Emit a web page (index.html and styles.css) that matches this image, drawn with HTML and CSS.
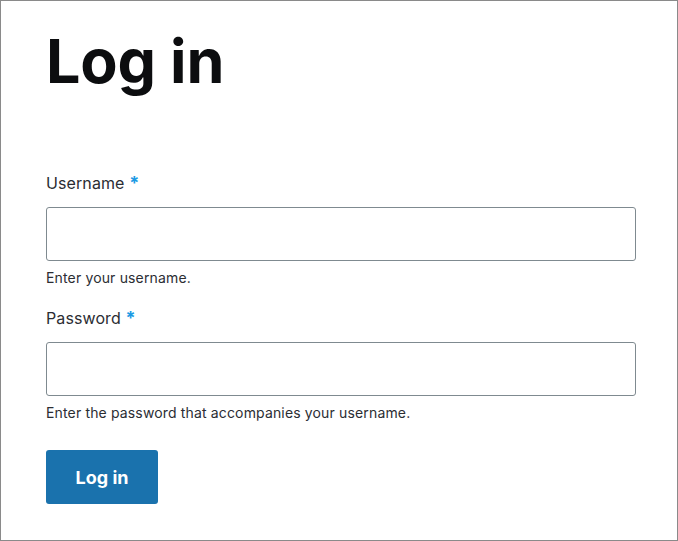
FILE: index.html
```html
<!DOCTYPE html>
<html>
<head>
<meta charset="utf-8">
<link rel="stylesheet" href="styles.css">
</head>
<body>
<div class="frame">
  <h1 class="title">Log in</h1>
  <form class="form">
    <div class="field">
      <label class="label">Username <span class="req">*</span></label>
      <input class="input" type="text">
      <div class="desc">Enter your username.</div>
    </div>
    <div class="field">
      <label class="label">Password <span class="req">*</span></label>
      <input class="input" type="password">
      <div class="desc">Enter the password that accompanies your username.</div>
    </div>
    <button class="btn" type="button">Log in</button>
  </form>
</div>
</body>
</html>
```
FILE: styles.css
```css
html, body { margin: 0; padding: 0; }
body { font-family: Inter, "Noto Sans", sans-serif; color: #2b2d33; background: #fff; }
.frame {
  width: 678px; height: 541px; box-sizing: border-box;
  border: 1px solid #8a8a8a;
  padding: 25px 41px 0 45px;
}
.title {
  margin: 0; font-size: 61px; font-weight: 700; line-height: 70px;
  color: #0c0d0f; letter-spacing: -0.2px;
}
.form { margin-top: 75px; display: flex; flex-direction: column; }
.field { display: flex; flex-direction: column; margin-bottom: 18px; }
.label { font-size: 16px; line-height: 24px; color: #2b2d33; margin-bottom: 12px; letter-spacing: 0.1px; }
.req { color: #1b9ae4; font-size: 18px; font-weight: 700; }
.input {
  height: 54px; box-sizing: border-box; width: 590px;
  border: 1px solid #7f8a90; border-radius: 3px; margin: 0;
}
.desc { font-size: 14px; line-height: 20px; margin-top: 7px; color: #2b2d33; letter-spacing: 0.15px; }
.btn {
  align-self: flex-start; width: 112px; height: 54px; margin-top: 9px;
  background: #1a72ad; color: #fff; border: 0; border-radius: 3px;
  font-family: inherit; font-size: 18px; font-weight: 700;
}
```
